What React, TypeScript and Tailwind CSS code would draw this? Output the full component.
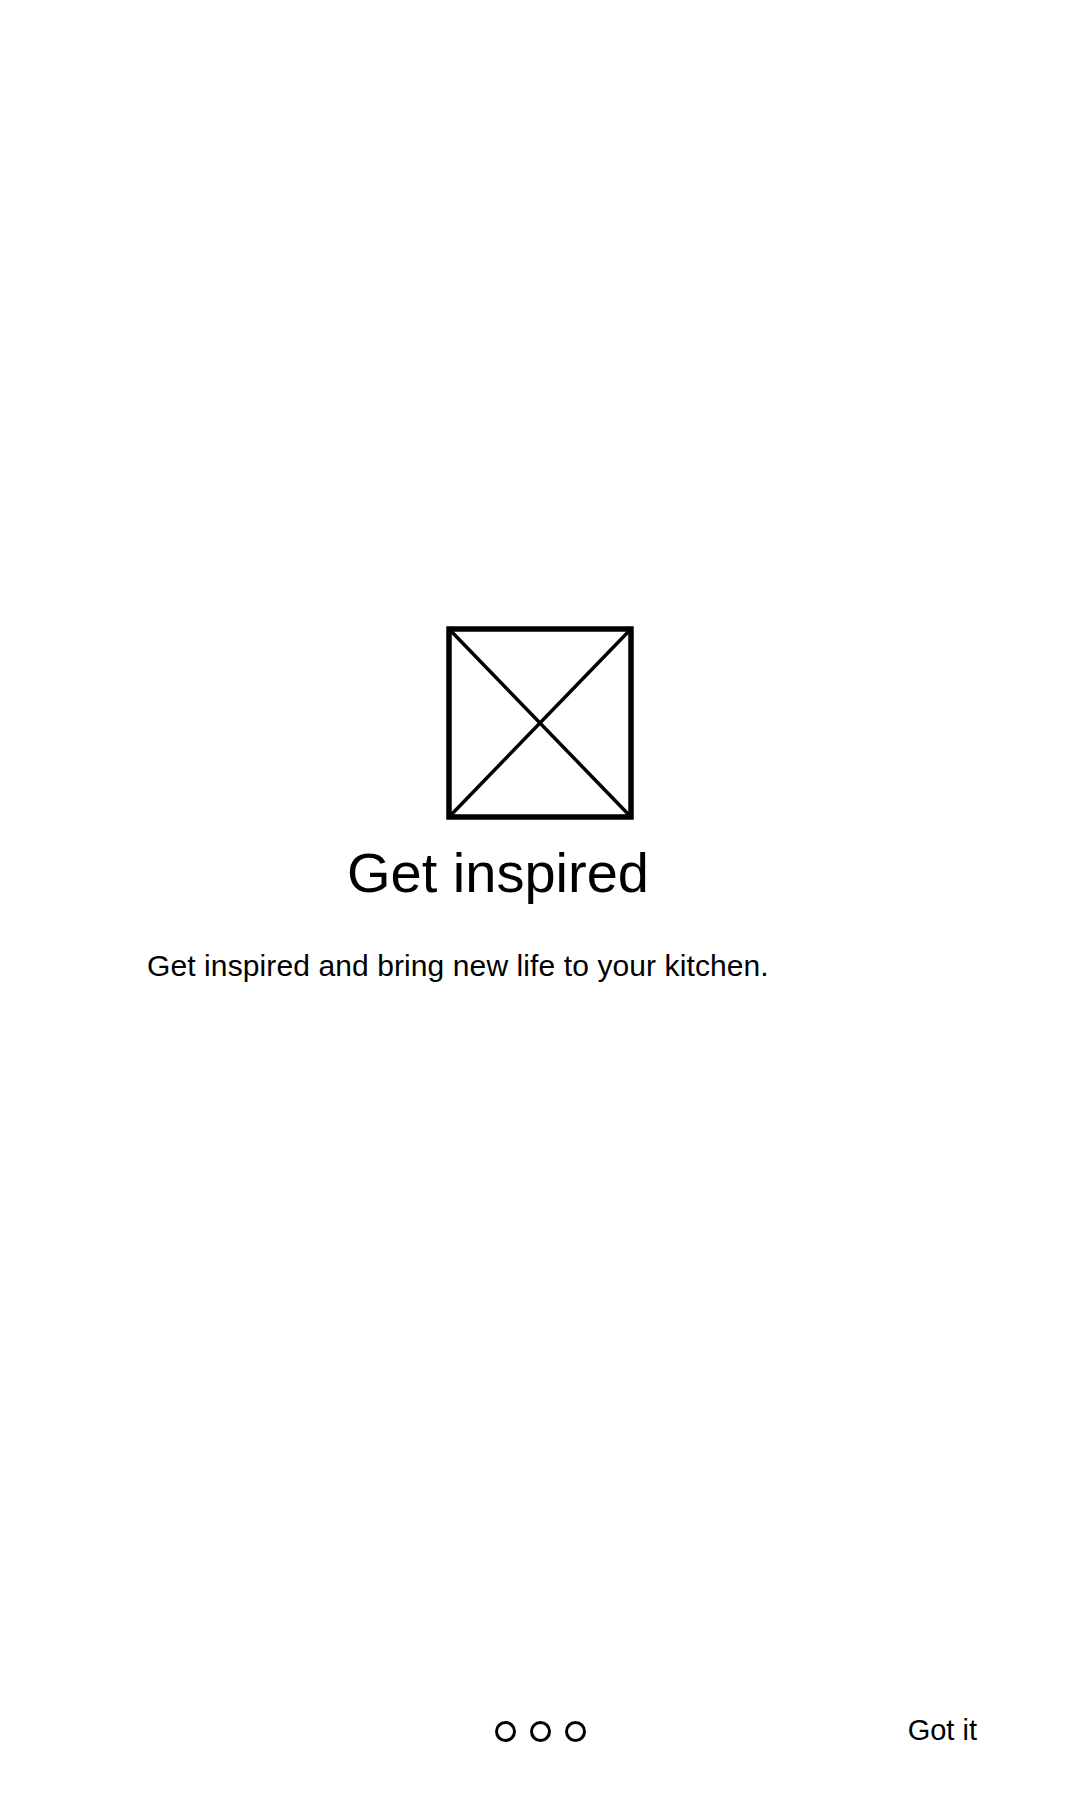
export default function App() {
  return (
    <div
      className="flex flex-col w-full min-h-[1800px] bg-white text-black"
      style={{ fontFamily: '"Liberation Sans", Arial, sans-serif' }}
    >
      <div className="flex flex-col pt-[626px]">
        <div className="flex justify-center">
          <svg width="188" height="194" viewBox="0 0 188 194">
            <rect x="3" y="3" width="182" height="188" fill="none" stroke="black" strokeWidth="5.5" />
            <line x1="4" y1="4" x2="184" y2="190" stroke="black" strokeWidth="3.5" />
            <line x1="184" y1="4" x2="4" y2="190" stroke="black" strokeWidth="3.5" />
          </svg>
        </div>

        <h1 className="mt-[21px] pr-[84px] text-center text-[56px] leading-[64px] font-normal">
          Get inspired
        </h1>

        <p className="mt-[44px] pl-[147px] text-[30px] leading-[34px] tracking-[0.1px]">
          Get inspired and bring new life to your kitchen.
        </p>
      </div>

      <div className="mt-auto grid grid-cols-3 items-center pb-[54px]">
        <div />
        <div className="flex justify-center gap-[14px] pt-[3px]">
          <span className="w-[21px] h-[21px] rounded-full border-[3px] border-black" />
          <span className="w-[21px] h-[21px] rounded-full border-[3px] border-black" />
          <span className="w-[21px] h-[21px] rounded-full border-[3px] border-black" />
        </div>
        <div className="text-right pr-[103px] text-[29px] leading-[32px]">Got it</div>
      </div>
    </div>
  );
}
